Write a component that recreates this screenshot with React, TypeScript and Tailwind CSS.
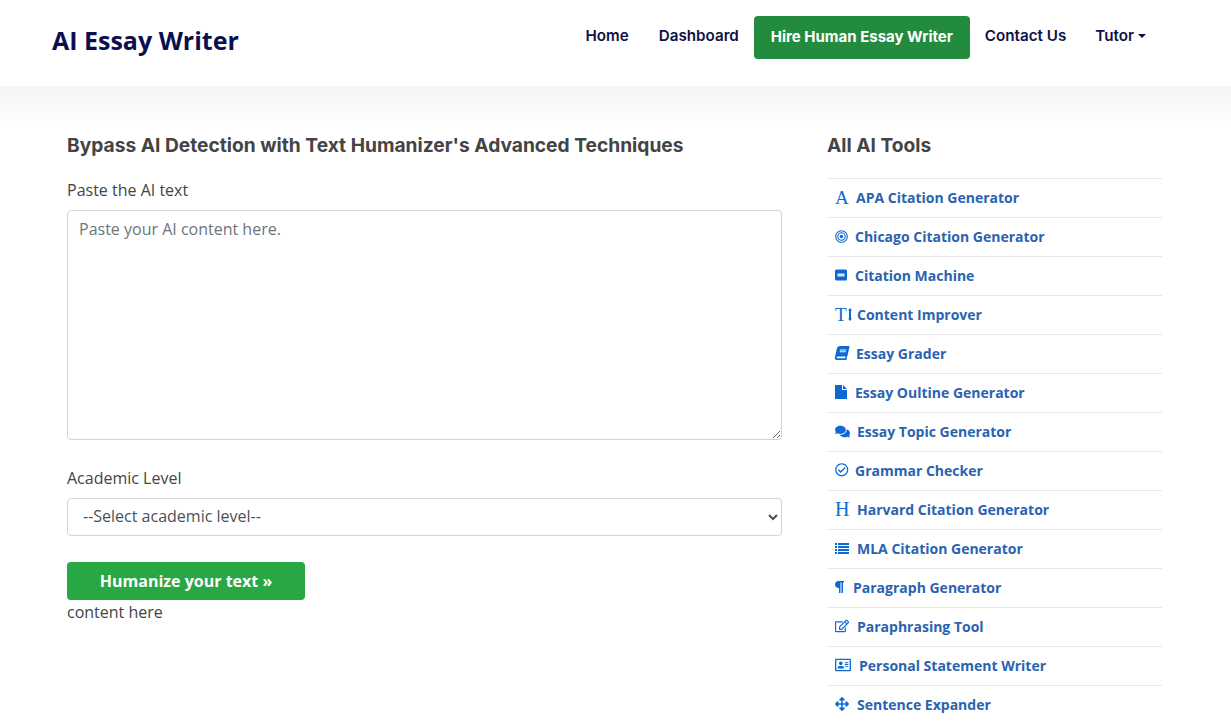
import React from "react";
import {
  FaBook,
  FaComments,
  FaRegCheckCircle,
  FaRegEdit,
  FaRegAddressCard,
  FaArrowsAlt,
} from "react-icons/fa";

const serif = "font-['Liberation_Serif',serif] text-[19px] font-normal leading-none";

const Bullseye = () => (
  <svg width="13" height="13" viewBox="0 0 13 13" fill="none" stroke="currentColor">
    <circle cx="6.5" cy="6.5" r="5.8" strokeWidth="1.1" />
    <circle cx="6.5" cy="6.5" r="3.7" strokeWidth="1.1" />
    <circle cx="6.5" cy="6.5" r="1.7" fill="currentColor" strokeWidth="0" />
  </svg>
);

const Machine = () => (
  <svg width="12" height="12" viewBox="0 0 12 12">
    <rect x="0" y="0.5" width="12" height="11" rx="1.5" fill="currentColor" />
    <rect x="2.5" y="4.500" width="7" height="3" fill="#ffffff" opacity="0.85" />
  </svg>
);

const FileIcon = () => (
  <svg width="12" height="14" viewBox="0 0 12 14" fill="currentColor">
    <path d="M0 0h7v5h5v9H0z" />
    <path d="M8 0l4 4H8z" />
  </svg>
);

const TextHeight = () => (
  <span className="flex items-center">
    <span className={serif}>T</span>
    <svg width="4" height="13" viewBox="0 0 4 13" fill="currentColor" className="ml-[1px]">
      <path d="M2 0l2 2.5H3V10.500h1L2 13 0 10.500h1V2.500H0z" />
    </svg>
  </span>
);

const ListIcon = () => (
  <svg width="14" height="11" viewBox="0 0 14 11" fill="currentColor">
    <path d="M0 0h2v2H0zM3 0h11v2H3zM0 3h2v2H0zM3 3h11v2H3zM0 6h2v2H0zM3 6h11v2H3zM0 9h2v2H0zM3 9h11v2H3z" />
  </svg>
);

const Pilcrow = () => (
  <svg width="9" height="12" viewBox="0 0 9 12" fill="currentColor">
    <path d="M3.500 0H9v1.500H8V12H6.500V1.500H5.500V12H4V7C1.500 7 0 5.500 0 3.500S1.500 0 3.500 0z" />
  </svg>
);

const tools: { icon: React.ReactNode; label: string; box: string }[] = [
  { icon: <span className={serif}>A</span>, label: "APA Citation Generator", box: "w-[21px]" },
  { icon: <Bullseye />, label: "Chicago Citation Generator", box: "w-[20px]" },
  { icon: <Machine />, label: "Citation Machine", box: "w-[20px]" },
  { icon: <TextHeight />, label: "Content Improver", box: "w-[22px]" },
  { icon: <FaBook className="text-[14px] -skew-x-12" />, label: "Essay Grader", box: "w-[21px]" },
  { icon: <FileIcon />, label: "Essay Oultine Generator", box: "w-[20px]" },
  { icon: <FaComments className="text-[15px]" />, label: "Essay Topic Generator", box: "w-[22px]" },
  { icon: <FaRegCheckCircle className="text-[13.500px]" />, label: "Grammar Checker", box: "w-[20px]" },
  { icon: <span className={`${serif} text-[20px]`}>H</span>, label: "Harvard Citation Generator", box: "w-[22px]" },
  { icon: <ListIcon />, label: "MLA Citation Generator", box: "w-[22px]" },
  { icon: <Pilcrow />, label: "Paragraph Generator", box: "w-[18px]" },
  { icon: <FaRegEdit className="text-[14px]" />, label: "Paraphrasing Tool", box: "w-[22px]" },
  { icon: <FaRegAddressCard className="text-[16px]" />, label: "Personal Statement Writer", box: "w-[24px]" },
  { icon: <FaArrowsAlt className="text-[14px]" />, label: "Sentence Expander", box: "w-[22px]" },
];

const navCls = "font-['Inter',sans-serif] text-[15.2px] font-semibold leading-[22px] text-[#0e1243]";

export default function App() {
  return (
    <div className="h-[726px] overflow-hidden bg-white font-['Open_Sans',sans-serif] text-[#444444]">
      <header className="flex h-[86px] items-start justify-between bg-white pl-[52px] pr-[85px]">
        <div className="mt-[22px] text-[25px] font-bold leading-[36px] text-[#0a0f50]">AI Essay Writer</div>
        <nav className="mt-[16px] flex items-start">
          <a className={`${navCls} mt-[9px] mr-[30px]`}>Home</a>
          <a className={`${navCls} mt-[9px] mr-[15px]`}>Dashboard</a>
          <a className="flex h-[43px] w-[216px] items-center justify-center rounded-[4px] bg-[#228b3e] pb-[1px] font-['Inter',sans-serif] text-[15px] font-bold text-white">
            Hire Human Essay Writer
          </a>
          <a className={`${navCls} mt-[9px] ml-[15px] mr-[29px]`}>Contact Us</a>
          <a className={`${navCls} mt-[9px] flex items-center`}>
            Tutor
            <span className="ml-[4px] h-0 w-0 border-x-[4px] border-t-[4px] border-x-transparent border-t-[#0e1243]" />
          </a>
        </nav>
      </header>
      <main className="flex bg-gradient-to-b from-[#f3f4f7] via-white via-[40px] to-white pl-[67px] pt-[46px]">
        <section className="w-[715px]">
          <h1 className="font-['Inter',sans-serif] text-[19.200px] font-bold leading-[27px] text-[#444444]">
            Bypass AI Detection with Text Humanizer's Advanced Techniques
          </h1>
          <label className="mt-[19px] block text-[16px] leading-[24px]">Paste the AI text</label>
          <textarea
            className="mt-[8px] block h-[230px] w-full rounded-[4px] border border-[#ced4da] bg-white px-[11px] py-[6px] text-[16px] leading-[24px] text-[#495057] placeholder:text-[#6c757d]"
            placeholder="Paste your AI content here."
          />
          <label className="mt-[26px] block text-[16px] leading-[24px]">Academic Level</label>
          <select className="mt-[8px] block h-[38px] w-full rounded-[4px] border border-[#ced4da] bg-white pb-[2px] pl-[11px] pr-[12px] text-[16px] text-[#495057]">
            <option>--Select academic level--</option>
          </select>
          <button className="mt-[26px] block h-[38px] w-[238px] rounded-[4px] bg-[#28a745] text-[16px] font-bold text-white">
            Humanize your text »
          </button>
          <p className="text-[16px] leading-[24px]">content here</p>
        </section>
        <aside className="ml-[45px] w-[335px]">
          <h2 className="font-['Inter',sans-serif] text-[19.200px] font-bold leading-[27px] text-[#444444]">All AI Tools</h2>
          <ul className="mt-[19px]">
            {tools.map((t) => (
              <li key={t.label} className="flex h-[39px] items-center border-t border-[#e6e8eb] pb-[2px] pl-[8px]">
                <span className={`${t.box} flex shrink-0 items-center text-[#0d6ad4]`}>{t.icon}</span>
                <span className="text-[14px] font-bold text-[#2a63b0]">{t.label}</span>
              </li>
            ))}
          </ul>
        </aside>
      </main>
    </div>
  );
}
